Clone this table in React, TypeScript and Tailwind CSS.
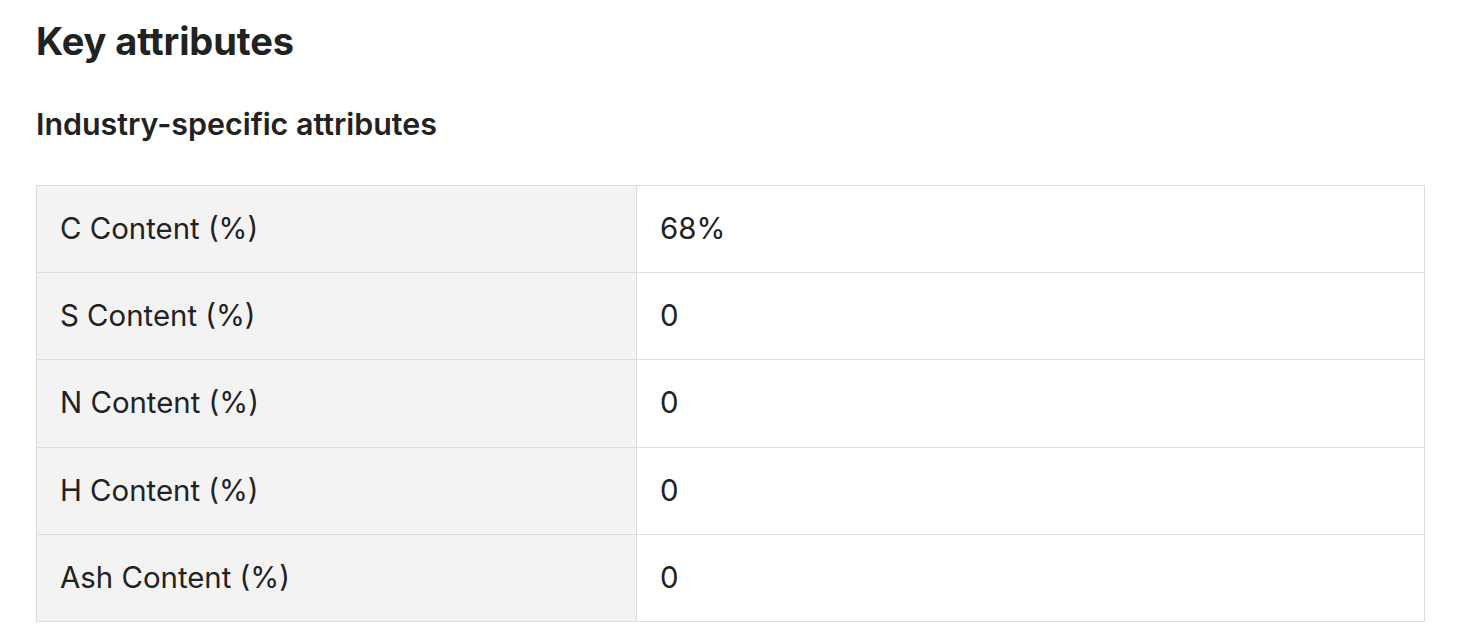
import React from "react";

const rows = [
  ["C Content (%)", "68%"],
  ["S Content (%)", "0"],
  ["N Content (%)", "0"],
  ["H Content (%)", "0"],
  ["Ash Content (%)", "0"],
];

export default function App() {
  return (
    <div
      className="bg-white text-[#222222] pl-[36px] pr-[34px] pt-[15px]"
      style={{ fontFamily: "Inter, 'Noto Sans', sans-serif" }}
    >
      <h2 className="text-[38px] font-bold leading-[52px] tracking-[-0.1px]">Key attributes</h2>
      <h3 className="mt-[39px] text-[30.4px] font-semibold leading-[36px]">Industry-specific attributes</h3>
      <table className="mt-[43px] w-full border-collapse border border-[#dddddd]">
        <tbody>
          {rows.map(([k, v]) => (
            <tr key={k} className="h-[87.2px]">
              <td className="w-[600px] bg-[#f3f3f3] border border-[#dddddd] pl-[23px] text-[29.4px] align-middle">
                {k}
              </td>
              <td className="border border-[#dddddd] pl-[23px] text-[29.4px] align-middle">{v}</td>
            </tr>
          ))}
        </tbody>
      </table>
    </div>
  );
}
